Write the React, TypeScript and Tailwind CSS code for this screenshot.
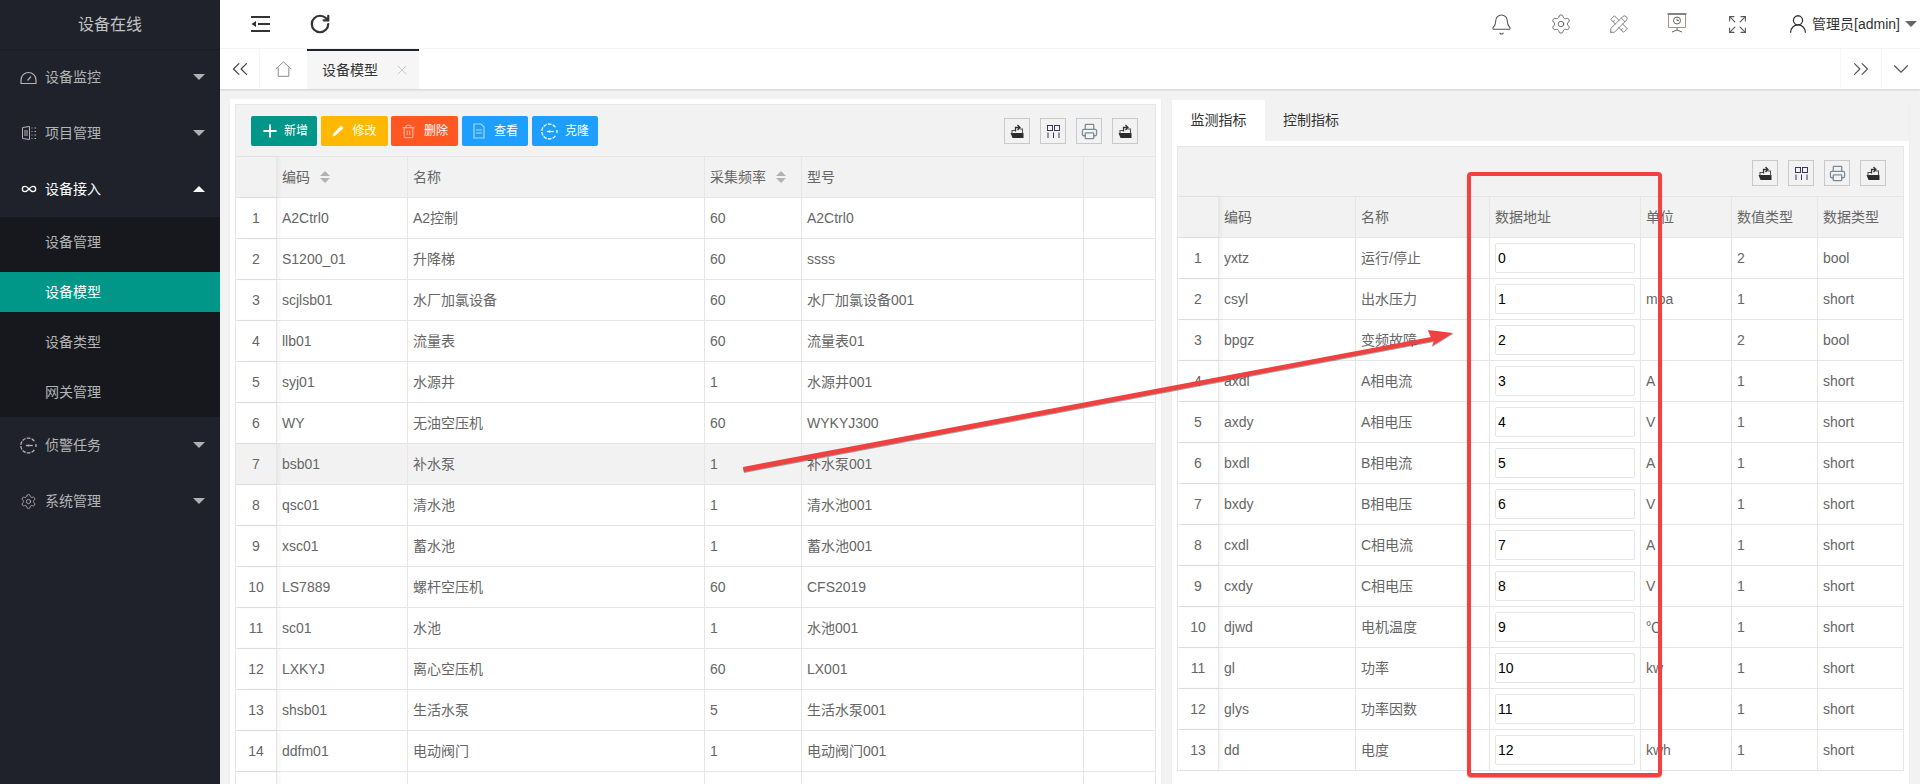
import React from 'react';
import {
  Bell,
  ChevronDown,
  ChevronsLeft,
  ChevronsRight,
  Expand,
  Infinity as InfinityIcon,
  Plus,
  Printer,
  RotateCw,
  Settings,
  Trash2,
  UserRound,
  X,
} from 'lucide-react';
import { TbTools } from 'react-icons/tb';

const FONT = 'font-["Liberation_Sans","Noto_Sans_CJK_SC",sans-serif]';

const modelRows = [
  ['A2Ctrl0', 'A2控制', '60', 'A2Ctrl0'],
  ['S1200_01', '升降梯', '60', 'ssss'],
  ['scjlsb01', '水厂加氯设备', '60', '水厂加氯设备001'],
  ['llb01', '流量表', '60', '流量表01'],
  ['syj01', '水源井', '1', '水源井001'],
  ['WY', '无油空压机', '60', 'WYKYJ300'],
  ['bsb01', '补水泵', '1', '补水泵001'],
  ['qsc01', '清水池', '1', '清水池001'],
  ['xsc01', '蓄水池', '1', '蓄水池001'],
  ['LS7889', '螺杆空压机', '60', 'CFS2019'],
  ['sc01', '水池', '1', '水池001'],
  ['LXKYJ', '离心空压机', '60', 'LX001'],
  ['shsb01', '生活水泵', '5', '生活水泵001'],
  ['ddfm01', '电动阀门', '1', '电动阀门001'],
];

const metricRows = [
  ['yxtz', '运行/停止', '0', '', '2', 'bool'],
  ['csyl', '出水压力', '1', 'mpa', '1', 'short'],
  ['bpgz', '变频故障', '2', '', '2', 'bool'],
  ['axdl', 'A相电流', '3', 'A', '1', 'short'],
  ['axdy', 'A相电压', '4', 'V', '1', 'short'],
  ['bxdl', 'B相电流', '5', 'A', '1', 'short'],
  ['bxdy', 'B相电压', '6', 'V', '1', 'short'],
  ['cxdl', 'C相电流', '7', 'A', '1', 'short'],
  ['cxdy', 'C相电压', '8', 'V', '1', 'short'],
  ['djwd', '电机温度', '9', '℃', '1', 'short'],
  ['gl', '功率', '10', 'kw', '1', 'short'],
  ['glys', '功率因数', '11', '', '1', 'short'],
  ['dd', '电度', '12', 'kwh', '1', 'short'],
];

const LEFT_COLS = 'grid-cols-[41px_131px_297px_97px_282px_1fr]';
const RIGHT_COLS = 'grid-cols-[41px_137px_134px_151px_91px_86px_1fr]';

const Caret = ({ up }: { up?: boolean }) =>
  up ? (
    <span className="w-0 h-0 border-x-[6px] border-x-transparent border-b-[6px] border-b-white" />
  ) : (
    <span className="w-0 h-0 border-x-[6px] border-x-transparent border-t-[6px] border-t-[#b0b0b0]" />
  );

const Sort = () => (
  <span className="flex flex-col gap-[2px] ml-[10px]">
    <span className="w-0 h-0 border-x-[5px] border-x-transparent border-b-[5px] border-b-[#b2b2b2]" />
    <span className="w-0 h-0 border-x-[5px] border-x-transparent border-t-[5px] border-t-[#b2b2b2]" />
  </span>
);

const GaugeIcon = () => (
  <svg width="17" height="15" viewBox="0 0 17 15" fill="none" stroke="currentColor" strokeWidth="1.2">
    <path d="M1 13.5 V10 A7.5 7.5 0 0 1 16 10 V13.5 Z" />
    <path d="M7.5 10.5 L11 6.5" />
  </svg>
);

const ProjectIcon = () => (
  <svg width="16" height="16" viewBox="0 0 16 16" fill="none" stroke="currentColor" strokeWidth="1">
    <path d="M1.5 2.5 L8.5 1.5 V14.5 L1.5 13.5 Z" />
    <path d="M4 5 V11 M6 5 V11" />
    <path d="M10.5 3 H11.5 M13.5 3 H15 M10.5 6.5 H11.5 M13.5 6.5 H15 M10.5 10 H11.5 M13.5 10 H15 M10.5 13.5 H11.5 M13.5 13.5 H15" />
  </svg>
);

const CloneIcon = ({ size = 16 }: { size?: number }) => (
  <svg width={size} height={size} viewBox="0 0 16 16" fill="none" stroke="currentColor" strokeWidth="1.2">
    <path d="M13.5 4 A7 7 0 1 0 13.5 12" strokeDasharray="3.4 1.1" />
    <path d="M5.5 8 H12" />
    <circle cx="8" cy="8" r="1" fill="currentColor" stroke="none" />
    <path d="M15 6.5 V9.5" />
  </svg>
);

const DocIcon = () => (
  <svg width="14" height="16" viewBox="0 0 14 16" fill="none" stroke="#a9dcff" strokeWidth="1.2">
    <path d="M2 1 H9 L12 4 V15 H2 Z" />
    <path d="M4 7 H10 M4 10 H10" />
  </svg>
);

const PencilIcon = () => (
  <svg width="12" height="12" viewBox="0 0 12 12" fill="white">
    <path d="M9 0.5 L11.5 3 L3.5 10.5 L0.5 11.5 L1.5 8.5 Z" />
  </svg>
);

const HomeIcon = () => (
  <svg width="17" height="16" viewBox="0 0 17 16" fill="none" stroke="#8a8a8a" strokeWidth="1">
    <path d="M0.8 8 L8.5 0.8 L16.2 8" />
    <path d="M3.2 6.5 V15.3 H13.8 V6.5" />
  </svg>
);

const ExportIcon = () => (
  <svg width="14" height="14" viewBox="0 0 14 14">
    <path d="M0.5 9 H13.5 V14 H2.5 Z" fill="#2b2b2b" />
    <path d="M2 9.5 V6.5 H5.5 M12.5 9.5 V5 H9.5" fill="none" stroke="#555" strokeWidth="1.1" />
    <path d="M5.5 7.5 V3.5 H9.5 M7.5 1 L10 3.5 L7.5 6" fill="none" stroke="#333" strokeWidth="1.3" />
  </svg>
);

const ColumnsIcon = () => (
  <svg width="13" height="13" viewBox="0 0 13 13" fill="none" stroke="#3b3560" strokeWidth="1">
    <rect x="0.5" y="0.5" width="5" height="5" />
    <rect x="7.5" y="0.5" width="5" height="5" />
    <path d="M1 7.5 V13 M6.5 7.5 V13 M12 7.5 V13" />
  </svg>
);

const ScreenIcon = () => (
  <svg width="20" height="20" viewBox="0 0 20 20" fill="none" stroke="#666" strokeWidth="1">
    <path d="M0.5 1 H19.5" strokeWidth="1.6" />
    <path d="M1.5 1.5 V14.5 H18.5 V1.5" stroke="#b08f7a" />
    <circle cx="10" cy="7.5" r="3.5" />
    <path d="M10 5.5 V7.5 H12" />
    <path d="M10 15 V17 M10 17 L5 19 M10 17 L15 19" />
  </svg>
);

const ShrinkIcon = () => (
  <svg width="19" height="18" viewBox="0 0 19 18" fill="none" stroke="#333" strokeWidth="2">
    <path d="M0 2 H19 M7 9 H19 M0 16 H19" />
    <path d="M0.5 9 L5 6 V12 Z" fill="#333" stroke="none" />
  </svg>
);

const menuTop = [
  { label: '设备监控', icon: <GaugeIcon /> },
  { label: '项目管理', icon: <ProjectIcon /> },
];
const menuBottom = [
  { label: '侦警任务', icon: <CloneIcon size={17} /> },
  { label: '系统管理', icon: <Settings size={19} strokeWidth={1.2} /> },
];

const MenuItem = ({ label, icon, open }: { label: string; icon: React.ReactNode; open?: boolean }) => (
  <div className={`h-[56px] flex items-center pl-[20px] pr-[15px] text-[14px] ${open ? 'text-white' : 'text-[#b4b4b4]'}`}>
    <span className="w-[17px] flex justify-center">{icon}</span>
    <span className="ml-[8px] flex-1">{label}</span>
    <Caret up={open} />
  </div>
);

const Sidebar = () => (
  <aside className="w-[220px] shrink-0 bg-[#1f222b]">
    <div className="h-[49px] flex items-center justify-center text-[16px] text-[#c2c2c2] shadow-[0_1px_1px_rgba(0,0,0,0.12)]">
      设备在线
    </div>
    {menuTop.map((m) => (
      <MenuItem key={m.label} {...m} />
    ))}
    <MenuItem label="设备接入" icon={<InfinityIcon size={16} strokeWidth={2} />} open />
    <div className="bg-[#16181e] py-[5px] text-[14px] text-[#b4b4b4]">
      <div className="h-[40px] mb-[10px] flex items-center pl-[45px]">设备管理</div>
      <div className="h-[40px] mb-[10px] flex items-center pl-[45px] bg-[#009688] text-white">设备模型</div>
      <div className="h-[40px] mb-[10px] flex items-center pl-[45px]">设备类型</div>
      <div className="h-[40px] flex items-center pl-[45px]">网关管理</div>
    </div>
    {menuBottom.map((m) => (
      <MenuItem key={m.label} {...m} />
    ))}
  </aside>
);

const TopBar = () => (
  <header className="h-[49px] bg-white flex items-center pl-[31px] pr-[3px] border-b border-[#f6f6f6]">
    <ShrinkIcon />
    <RotateCw size={22} strokeWidth={2.4} className="ml-[39px] text-[#333]" />
    <div className="flex-1" />
    <Bell size={23} strokeWidth={1.1} className="text-[#555]" />
    <Settings size={22} strokeWidth={1} className="ml-[37px] text-[#666]" />
    <TbTools size={22} strokeWidth={1} className="ml-[36px] text-[#777]" />
    <span className="ml-[37px] -mt-[2px]">
      <ScreenIcon />
    </span>
    <Expand size={21} strokeWidth={1.2} className="ml-[40px] text-[#555]" />
    <UserRound size={22} strokeWidth={1.4} className="ml-[39px] text-[#333]" />
    <span className="ml-[3px] text-[14px] text-[#333] whitespace-nowrap">管理员[admin]</span>
    <span className="ml-[5px] w-0 h-0 border-x-[6px] border-x-transparent border-t-[6px] border-t-[#666]" />
  </header>
);

const TabBar = () => (
  <div className="h-[40px] bg-white flex items-stretch shadow-[0_1px_2px_rgba(0,0,0,0.15)] relative">
    <div className="w-[40px] flex items-center justify-center border-r border-[#f6f6f6] text-[#444]">
      <ChevronsLeft size={26} strokeWidth={1.1} />
    </div>
    <div className="w-[47px] flex items-center justify-center">
      <HomeIcon />
    </div>
    <div className="w-[112px] bg-[#f6f6f6] border-t-2 border-[#20222a] flex items-center pl-[15px] text-[14px] text-[#333]">
      设备模型
      <X size={16} strokeWidth={1.3} className="ml-[16px] text-[#c2c2c2]" />
    </div>
    <div className="flex-1" />
    <div className="w-[41px] flex items-center justify-center border-l border-[#f6f6f6] text-[#555]">
      <ChevronsRight size={26} strokeWidth={1.1} />
    </div>
    <div className="w-[39px] flex items-center justify-center border-l border-[#f6f6f6] text-[#555]">
      <ChevronDown size={26} strokeWidth={1} />
    </div>
  </div>
);

const ToolBtn = ({ children }: { children: React.ReactNode }) => (
  <span className="w-[26px] h-[26px] border border-[#c9c9c9] flex items-center justify-center">{children}</span>
);

const TableTools = () => (
  <div className="flex items-center gap-[10px]">
    <ToolBtn>
      <ExportIcon />
    </ToolBtn>
    <ToolBtn>
      <ColumnsIcon />
    </ToolBtn>
    <ToolBtn>
      <Printer size={17} strokeWidth={1.8} className="text-[#7a8a99]" />
    </ToolBtn>
    <ToolBtn>
      <ExportIcon />
    </ToolBtn>
  </div>
);

const Cell = ({ children, first, className = '' }: { children?: React.ReactNode; first?: boolean; className?: string }) =>
  first ? (
    <div className="border-r border-[#e6e6e6] flex items-center justify-center shadow-[2px_0_4px_rgba(0,0,0,0.05)]">
      {children}
    </div>
  ) : (
    <div className={`border-r border-[#e6e6e6] last:border-r-0 flex items-center pl-[5px] whitespace-nowrap overflow-hidden ${className}`}>
      {children}
    </div>
  );

const ActionButton = ({ color, width, icon, label, gap }: { color: string; width: string; icon: React.ReactNode; label: string; gap: string }) => (
  <button className={`h-[30px] rounded-[2px] text-white text-[12px] flex items-center justify-center ${color} ${width}`}>
    {icon}
    <span className={gap}>{label}</span>
  </button>
);

const ModelPanel = () => (
  <section className="w-[931px] shrink-0 bg-white px-[5px] pt-[5px] shadow-[0_1px_2px_rgba(0,0,0,0.05)]">
    <div className="border-x border-[#e6e6e6] text-[14px] text-[#666] h-full">
      <div className="h-[53px] bg-[#f2f2f2] border-y border-[#e6e6e6] pt-[11px] pl-[15px] pr-[17px] flex items-start justify-between">
        <div className="flex">
          <ActionButton color="bg-[#009688]" width="w-[66px]" icon={<Plus size={20} strokeWidth={2.4} />} label="新增" gap="ml-[4px]" />
          <span className="w-[4px]" />
          <ActionButton color="bg-[#ffb800]" width="w-[67px]" icon={<PencilIcon />} label="修改" gap="ml-[8px]" />
          <span className="w-[3px]" />
          <ActionButton color="bg-[#ff5722]" width="w-[67px]" icon={<Trash2 size={15} strokeWidth={1.4} className="text-[#ffd0c0]" />} label="删除" gap="ml-[8px]" />
          <span className="w-[4px]" />
          <ActionButton color="bg-[#1e9fff]" width="w-[66px]" icon={<DocIcon />} label="查看" gap="ml-[8px]" />
          <span className="w-[4px]" />
          <ActionButton color="bg-[#1e9fff]" width="w-[66px]" icon={<CloneIcon size={17} />} label="克隆" gap="ml-[7px]" />
        </div>
        <div className="pt-[2px]">
          <TableTools />
        </div>
      </div>
      <div className={`grid ${LEFT_COLS} h-[41px] bg-[#f2f2f2] border-b border-[#e6e6e6]`}>
        <Cell first />
        <Cell>
          编码
          <Sort />
        </Cell>
        <Cell>名称</Cell>
        <Cell>
          采集频率
          <Sort />
        </Cell>
        <Cell>型号</Cell>
        <Cell />
      </div>
      {modelRows.map((row, i) => (
        <div key={row[0]} className={`grid ${LEFT_COLS} h-[41px] border-b border-[#e6e6e6] ${i === 6 ? 'bg-[#f2f2f2]' : ''}`}>
          <Cell first>{i + 1}</Cell>
          {row.map((text, j) => (
            <Cell key={j}>{text}</Cell>
          ))}
          <Cell />
        </div>
      ))}
      <div className={`grid ${LEFT_COLS} h-[41px]`}>
        <Cell first />
        <Cell />
        <Cell />
        <Cell />
        <Cell />
        <Cell />
      </div>
    </div>
  </section>
);

const MetricPanel = () => (
  <section className="w-[737px] shrink-0 mt-[1px] bg-white shadow-[0_1px_2px_rgba(0,0,0,0.05)]">
    <div className="h-[41px] bg-[#f2f2f2] flex text-[14px] text-[#333]">
      <div className="w-[93px] bg-white flex items-center justify-center">监测指标</div>
      <div className="px-[18px] flex items-center">控制指标</div>
    </div>
    <div className="px-[5px] pt-[5px] text-[14px] text-[#666]">
      <div className="border-x border-[#e6e6e6]">
        <div className="h-[51px] bg-[#f2f2f2] border-y border-[#e6e6e6] pt-[13px] pr-[17px] flex justify-end items-start">
          <TableTools />
        </div>
        <div className={`grid ${RIGHT_COLS} h-[41px] bg-[#f2f2f2] border-b border-[#e6e6e6]`}>
          <Cell first />
          <Cell>编码</Cell>
          <Cell>名称</Cell>
          <Cell>数据地址</Cell>
          <Cell>单位</Cell>
          <Cell>数值类型</Cell>
          <Cell>数据类型</Cell>
        </div>
        {metricRows.map((row, i) => (
          <div key={row[0]} className={`grid ${RIGHT_COLS} h-[41px] border-b border-[#e6e6e6]`}>
            <Cell first>{i + 1}</Cell>
            <Cell>{row[0]}</Cell>
            <Cell>{row[1]}</Cell>
            <Cell>
              <input
                readOnly
                value={row[2]}
                className="w-[140px] h-[30px] border border-[#e6e6e6] rounded-[2px] pl-[2px] text-[14px] text-black outline-none bg-white"
              />
            </Cell>
            <Cell>{row[3]}</Cell>
            <Cell>{row[4]}</Cell>
            <Cell>{row[5]}</Cell>
          </div>
        ))}
      </div>
    </div>
  </section>
);

// red markup drawn over the screenshot
const Annotations = () => (
  <>
    <div className="absolute left-[1467px] top-[172px] w-[195px] h-[605px] border-[4px] border-[#f34141] rounded-[4px] shadow-[0_1px_1px_rgba(0,0,0,0.35)] pointer-events-none" />
    <svg className="absolute inset-0 pointer-events-none" width="1920" height="784" viewBox="0 0 1920 784">
      <polygon
        points="743,467 1431,337 1428,330 1453,333 1432,346 1434,341 744,472"
        fill="#ee4140"
        className="drop-shadow-[0_1px_0_rgba(0,0,0,0.35)]"
      />
    </svg>
  </>
);

export default function App() {
  return (
    <div className={`relative w-[1920px] h-[784px] overflow-hidden flex bg-[#f2f2f2] ${FONT}`}>
      <Sidebar />
      <main className="flex-1 flex flex-col min-w-0">
        <TopBar />
        <TabBar />
        <div className="flex-1 flex min-h-0 pt-[10px] pl-[10px] gap-[11px] overflow-hidden">
          <ModelPanel />
          <MetricPanel />
        </div>
      </main>
      <Annotations />
    </div>
  );
}
